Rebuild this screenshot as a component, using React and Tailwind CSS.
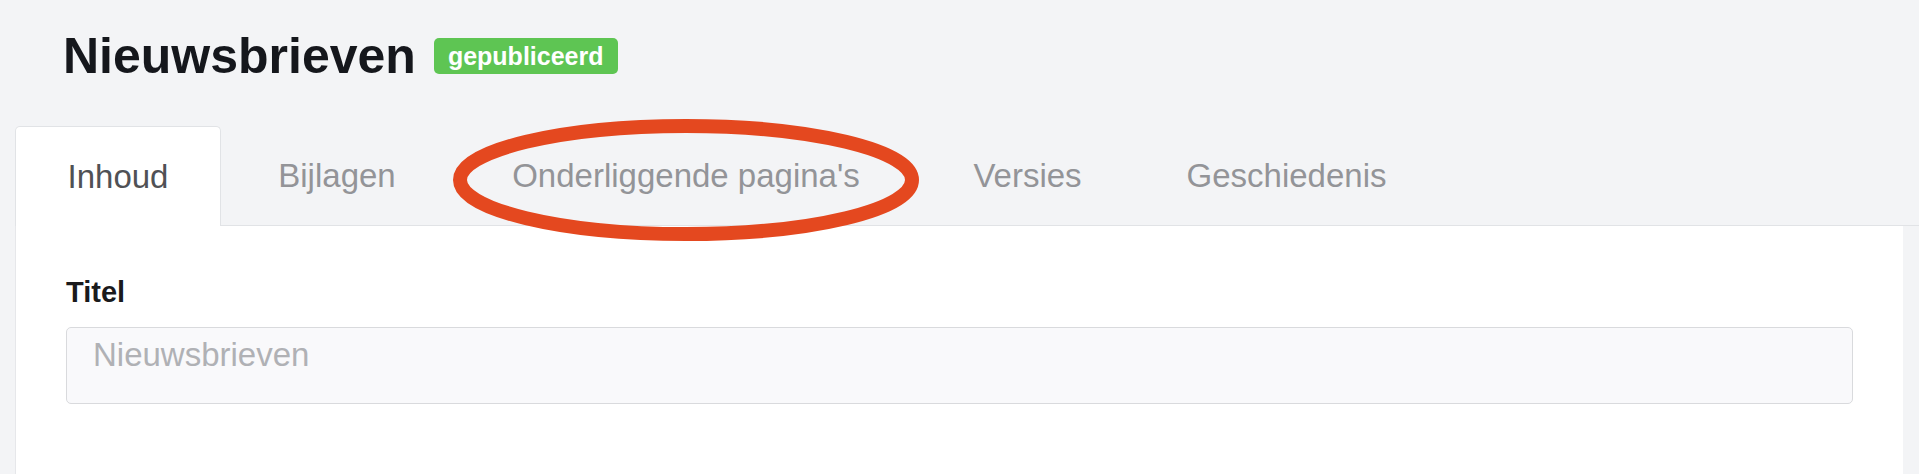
import React from 'react';

const tabs = [
  { label: 'Inhoud', width: 'w-[206px]', active: true },
  { label: 'Bijlagen', width: 'w-[232px]' },
  { label: "Onderliggende pagina's", width: 'w-[466px]' },
  { label: 'Versies', width: 'w-[217px]' },
  { label: 'Geschiedenis', width: 'w-[301px]' },
];

export default function App() {
  return (
    <div className="relative h-[474px] w-full overflow-hidden bg-[#f3f4f6] font-['Liberation_Sans',Arial,sans-serif]">
      {/* header */}
      <div className="flex items-center gap-[18px] pl-[63px] pt-[31px]">
        <h1 className="text-[50px] font-bold leading-none text-[#15171c]">Nieuwsbrieven</h1>
        <span className="flex h-[36px] items-center rounded-[5px] bg-[#5ec553] px-[14px] text-[25px] font-bold leading-none text-white">
          gepubliceerd
        </span>
      </div>

      {/* tabs */}
      <div className="ml-[15px] mt-[45px] flex h-[100px] items-end border-b border-[#e1e3e6]">
        {tabs.map((t) =>
          t.active ? (
            <div
              key={t.label}
              className={`${t.width} -mb-px flex h-[100px] items-center justify-center rounded-t-[5px] border border-b-0 border-[#e1e3e6] bg-white text-[33px] leading-none text-[#505155]`}
            >
              {t.label}
            </div>
          ) : (
            <div
              key={t.label}
              className={`${t.width} flex h-[99px] items-center justify-center text-[33px] leading-none text-[#939498]`}
            >
              {t.label}
            </div>
          )
        )}
      </div>

      {/* panel */}
      <div className="ml-[15px] mr-[16px] h-[260px] border-l border-[#e6e7ea] bg-white px-[50px] pt-[52px]">
        <label className="block text-[29px] font-bold leading-none text-[#1a1a1c]">Titel</label>
        <div className="mt-[20px] h-[77px] rounded-[5px] border border-[#d9dadd] bg-[#f9f9fb] pl-[26px] pt-[10px] text-[33px] leading-none text-[#b0b1b5]">
          Nieuwsbrieven
        </div>
      </div>

      {/* annotation */}
      <svg className="pointer-events-none absolute left-0 top-0" width="1919" height="474">
        <ellipse cx="686" cy="180" rx="226" ry="54" fill="none" stroke="#e4481f" strokeWidth="14" />
      </svg>
    </div>
  );
}
